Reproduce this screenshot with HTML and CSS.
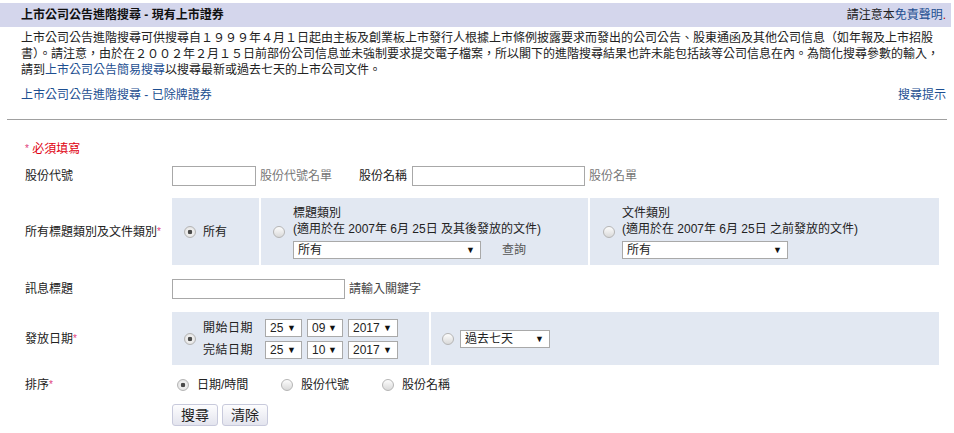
FILE: index.html
```html
<!DOCTYPE html>
<html lang="zh-Hant">
<head>
  <meta charset="UTF-8">
  <title>上市公司公告進階搜尋 - 現有上市證券</title>
  <link rel="stylesheet" href="styles.css">
</head>
<body>

  <div class="topbar">
    <span class="title">上市公司公告進階搜尋 - 現有上市證券</span>
    <span class="notice">請注意本<a href="#">免責聲明</a><span class="dot">.</span></span>
  </div>

  <p class="intro">上市公司公告進階搜尋可供搜尋自１９９９年４月１日起由主板及創業板上市發行人根據上市條例披露要求而發出的公司公告、股東通函及其他公司信息（如年報及上市招股<br>書）。請注意，由於在２００２年２月１５日前部份公司信息並未強制要求提交電子檔案，所以閣下的進階搜尋結果也許未能包括該等公司信息在內。為簡化搜尋參數的輸入，<br>請到<a href="#">上市公司公告簡易搜尋</a>以搜尋最新或過去七天的上市公司文件。</p>

  <div class="links">
    <a href="#">上市公司公告進階搜尋 - 已除牌證券</a>
    <a href="#">搜尋提示</a>
  </div>

  <div class="rule"></div>

  <form class="search">
    <div class="required"><span class="star">*</span> 必須填寫</div>

    <!-- stock code / name -->
    <div class="row row-code">
      <div class="label">股份代號</div>
      <div class="field">
        <input type="text" class="txt w-code">
        <span class="hint">股份代號名單</span>
        <span class="inline-label">股份名稱</span>
        <input type="text" class="txt w-name">
        <span class="hint">股份名單</span>
      </div>
    </div>

    <!-- headline / document type -->
    <div class="row row-type">
      <div class="label">所有標題類別及文件類別<span class="star">*</span></div>
      <div class="panel">
        <div class="cell cell-all">
          <input type="radio" name="type" class="radio" checked>
          <span>所有</span>
        </div>
        <div class="cell cell-headline">
          <input type="radio" name="type" class="radio">
          <div class="stack">
            <div>標題類別</div>
            <div>(適用於在 2007年 6月 25日 及其後發放的文件)</div>
            <div class="select-line">
              <span class="pick w-cat"><select><option>所有</option></select></span>
              <span class="lookup">查詢</span>
            </div>
          </div>
        </div>
        <div class="cell cell-doc">
          <input type="radio" name="type" class="radio">
          <div class="stack">
            <div>文件類別</div>
            <div>(適用於在 2007年 6月 25日 之前發放的文件)</div>
            <div class="select-line">
              <span class="pick w-doc"><select><option>所有</option></select></span>
            </div>
          </div>
        </div>
      </div>
    </div>

    <!-- headline keyword -->
    <div class="row row-title">
      <div class="label">訊息標題</div>
      <div class="field">
        <input type="text" class="txt w-name">
        <span class="hint dark">請輸入關鍵字</span>
      </div>
    </div>

    <!-- release date -->
    <div class="row row-date">
      <div class="label">發放日期<span class="star">*</span></div>
      <div class="panel">
        <div class="cell cell-range">
          <input type="radio" name="date" class="radio" checked>
          <div class="dates">
            <span class="date-label">開始日期</span>
            <span class="pick w-day"><select><option>25</option></select></span>
            <span class="pick w-month"><select><option>09</option></select></span>
            <span class="pick w-year"><select><option>2017</option></select></span>
            <span class="date-label">完結日期</span>
            <span class="pick w-day"><select><option>25</option></select></span>
            <span class="pick w-month"><select><option>10</option></select></span>
            <span class="pick w-year"><select><option>2017</option></select></span>
          </div>
        </div>
        <div class="cell cell-period">
          <input type="radio" name="date" class="radio">
          <span class="pick w-period"><select><option>過去七天</option></select></span>
        </div>
      </div>
    </div>

    <!-- sort order -->
    <div class="row row-sort">
      <div class="label">排序<span class="star">*</span></div>
      <div class="sorts">
        <label class="opt"><input type="radio" name="sort" class="radio" checked> 日期/時間</label>
        <label class="opt"><input type="radio" name="sort" class="radio"> 股份代號</label>
        <label class="opt"><input type="radio" name="sort" class="radio"> 股份名稱</label>
      </div>
    </div>

    <div class="buttons">
      <button type="button" class="btn">搜尋</button>
      <button type="reset" class="btn">清除</button>
    </div>
  </form>

</body>
</html>
```

FILE: styles.css
```css
body {
  margin: 0;
  background: #fff;
  color: #222;
  font-family: "Liberation Sans", "Noto Sans CJK TC", sans-serif;
  font-size: 12px;
  line-height: 16px;
}

a {
  color: #1d4f91;
  text-decoration: none;
}

/* Top bar */
.topbar {
  margin-top: 3px;
  width: 951px;
  height: 24px;
  box-sizing: border-box;
  padding: 0 5px 0 21px;
  background: #d4d6ec;
  display: flex;
  justify-content: space-between;
  align-items: center;
}

.title {
  font-weight: bold;
  color: #111;
}

.notice .dot {
  color: #b00;
}

.intro {
  margin: 3px 0 0 21px;
  white-space: nowrap;
}

.links {
  width: 925px;
  margin: 9px 0 0 21px;
  display: flex;
  justify-content: space-between;
}

.rule {
  width: 940px;
  margin: 16px 0 0 7px;
  border-top: 1px solid #a0a0a0;
}

/* Search form */
.search {
  padding-left: 25px;
}

.required {
  margin-top: 21px;
  color: #e00010;
}

.star {
  color: #e0407a;
  font-size: 10px;
  vertical-align: top;
}

.row {
  display: grid;
  grid-template-columns: 147px auto;
  align-items: center;
}

.row-code { margin-top: 9px; }
.row-type { margin-top: 12px; }
.row-title { margin-top: 14px; }
.row-date { margin-top: 13px; }
.row-sort { margin-top: 12px; }

.field {
  display: flex;
  align-items: center;
}

.txt {
  height: 20px;
  box-sizing: border-box;
  margin: 0;
  padding: 0 3px;
  border: 1px solid #a8a8a8;
  font: inherit;
}

.w-code { width: 84px; }
.w-name { width: 173px; }

.hint {
  margin-left: 4px;
  color: #777;
}

.hint.dark {
  color: #444;
}

.inline-label {
  margin: 0 5px 0 27px;
}

/* Shaded option panels */
.panel {
  display: flex;
  gap: 2px;
  width: 767px;
}

.cell {
  background: #e2e8f2;
  display: flex;
  align-items: center;
  box-sizing: border-box;
}

.row-type .cell { height: 67px; }
.cell-all { width: 87px; padding-left: 12px; gap: 7px; }
.cell-headline { width: 327px; padding-left: 12px; gap: 8px; }
.cell-doc { flex: 1; padding-left: 13px; gap: 7px; }

.stack .select-line {
  margin-top: 4px;
  display: flex;
  align-items: center;
}

.lookup {
  margin-left: 21px;
  color: #555;
}

.row-date .cell { height: 53px; }
.cell-range { width: 257px; padding-left: 12px; gap: 7px; }
.cell-period { flex: 1; padding-left: 11px; gap: 6px; }

.dates {
  display: grid;
  grid-template-columns: 57px 37px 36px 50px;
  column-gap: 5px;
  row-gap: 4px;
  align-items: center;
}

.date-label {
  letter-spacing: 0.5px;
}

/* Radios */
.radio {
  appearance: none;
  flex: none;
  width: 12px;
  height: 12px;
  margin: 0;
  box-sizing: border-box;
  border: 1px solid #b5b5b5;
  border-radius: 50%;
  background: linear-gradient(#fdfdfd, #d9d9d9);
}

.radio:checked {
  background: radial-gradient(circle, #4a4a4a 0 2px, #f2f2f2 2.6px, #d6d6d6 100%);
}

/* Selects */
.pick {
  position: relative;
  display: inline-block;
  height: 18px;
}

.pick select {
  appearance: none;
  width: 100%;
  height: 18px;
  margin: 0;
  padding: 0 0 0 4px;
  border: 1px solid #a9a9a9;
  border-radius: 0;
  background: #fff;
  color: #222;
  font: inherit;
  line-height: 16px;
}

.pick::after {
  content: "▼";
  position: absolute;
  right: 6px;
  top: 4px;
  font-size: 9px;
  line-height: 10px;
  color: #111;
  pointer-events: none;
}

.w-cat { width: 188px; }
.w-doc { width: 166px; }
.w-period { width: 90px; }
.w-day { width: 37px; }
.w-month { width: 36px; }
.w-year { width: 50px; }

/* Sort options */
.sorts {
  display: grid;
  grid-template-columns: 104px 101px auto;
  margin-left: 5px;
}

.opt {
  display: flex;
  align-items: center;
  gap: 8px;
}

/* Buttons */
.buttons {
  margin: 11px 0 0 147px;
  display: flex;
  gap: 4px;
}

.btn {
  height: 22px;
  padding: 0 8px;
  border: 1px solid #c8cadc;
  border-radius: 3px;
  background: linear-gradient(#fdfdfe, #e3e4ee);
  color: #222;
  font: inherit;
  font-size: 14px;
  cursor: pointer;
}
```
